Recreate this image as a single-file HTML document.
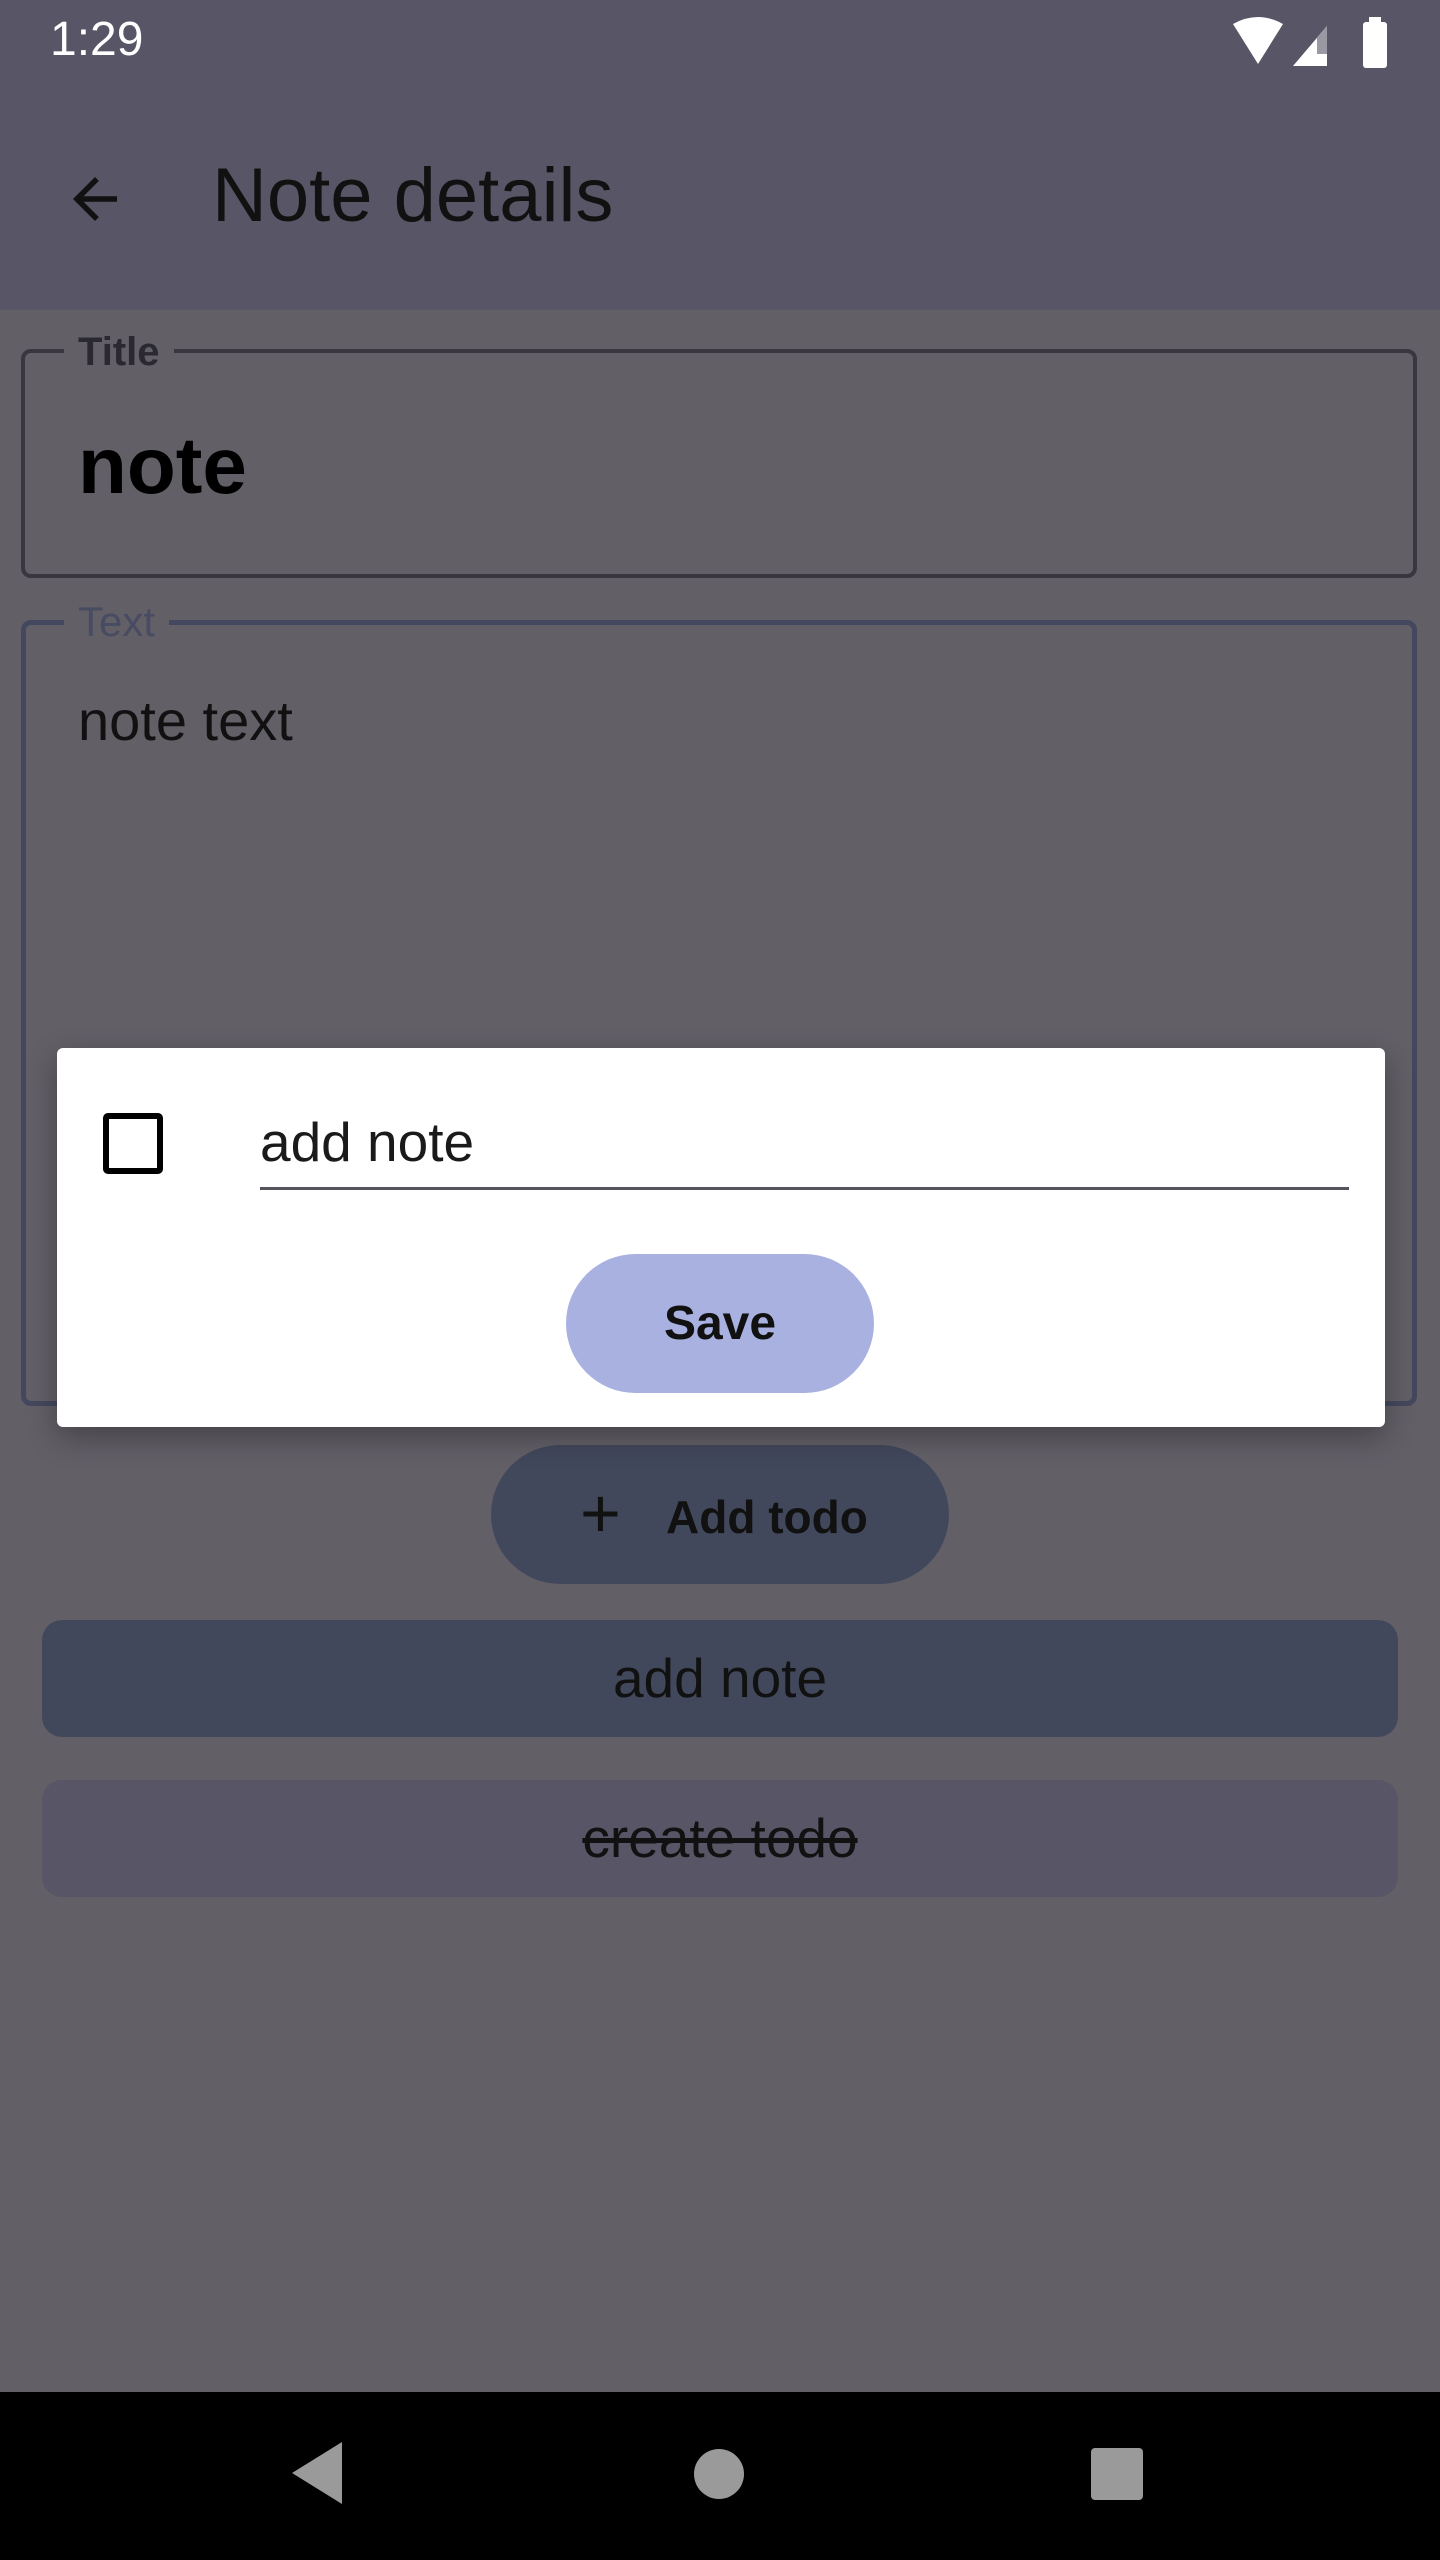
<!DOCTYPE html>
<html><head><meta charset="utf-8"><style>
*{margin:0;padding:0;box-sizing:border-box}
body{width:1440px;height:2560px;background:#625f67;font-family:"Liberation Sans",Roboto,sans-serif;position:relative;overflow:hidden;color:#000}
.abs{position:absolute}
</style></head><body>
<div class="abs" style="left:0;top:0;width:1440px;height:310px;background:#585666"></div>
<div class="abs" style="left:50px;top:12px;font-size:48px;color:#fff;font-weight:500">1:29</div>
<svg class="abs" style="left:1225px;top:14px" width="180" height="56" viewBox="0 0 180 56">
<path d="M8 10 Q33 -4 58 10 L33 50 Z" fill="#fff"/>
<path d="M68 52 L102 12 L102 52 Z" fill="#fff"/>
<path d="M92 24 L102 12 L102 40 L92 40Z" fill="#9a98a2"/>
<text x="92" y="52" font-size="18" fill="#fff" font-family="Liberation Sans">x</text>
<rect x="138" y="8" width="24" height="46" rx="3" fill="#fff"/><rect x="144" y="3" width="12" height="6" fill="#fff"/>
</svg>
<svg class="abs" style="left:62px;top:166px" width="66" height="66" viewBox="0 0 24 24"><path d="M20 11H7.83l5.59-5.59L12 4l-8 8 8 8 1.41-1.41L7.83 13H20v-2z" fill="#111"/></svg>
<div class="abs" style="left:212px;top:152px;font-size:76px;color:#111">Note details</div>

<div class="abs" style="left:21px;top:349px;width:1396px;height:229px;border:4px solid #38363f;border-radius:10px"></div>
<div class="abs" style="left:64px;top:330px;padding:0 14px;background:#625f67;font-size:40px;font-weight:bold;color:#2a2830">Title</div>
<div class="abs" style="left:78px;top:420px;font-size:80px;font-weight:bold">note</div>

<div class="abs" style="left:21px;top:620px;width:1396px;height:786px;border:5px solid #44485e;border-radius:10px"></div>
<div class="abs" style="left:64px;top:598px;padding:0 14px;background:#625f67;font-size:42px;color:#484c62">Text</div>
<div class="abs" style="left:78px;top:688px;font-size:56px;color:#111">note text</div>

<div class="abs" style="left:491px;top:1445px;width:458px;height:139px;border-radius:70px;background:#42485c"></div>
<div class="abs" style="left:580px;top:1478px;font-size:70px;color:#111;line-height:70px">+</div>
<div class="abs" style="left:666px;top:1490px;font-size:46px;font-weight:bold;color:#111">Add todo</div>

<div class="abs" style="left:42px;top:1620px;width:1356px;height:117px;border-radius:20px;background:#42485c;text-align:center;line-height:117px;font-size:55px;color:#111">add note</div>
<div class="abs" style="left:42px;top:1780px;width:1356px;height:117px;border-radius:20px;background:#575566;text-align:center;line-height:117px;font-size:55px;color:#111;text-decoration:line-through">create todo</div>

<div class="abs" style="left:57px;top:1048px;width:1328px;height:379px;background:#fff;border-radius:6px;box-shadow:0 10px 30px rgba(0,0,0,.3)"></div>
<div class="abs" style="left:103px;top:1113px;width:60px;height:61px;border:6px solid #000;border-radius:5px"></div>
<div class="abs" style="left:260px;top:1110px;font-size:55px;color:#1a1a1a">add note</div>
<div class="abs" style="left:260px;top:1187px;width:1089px;height:3px;background:#55535c"></div>
<div class="abs" style="left:566px;top:1254px;width:308px;height:139px;border-radius:70px;background:#a8b1e0;text-align:center;line-height:139px;font-size:48px;font-weight:bold;color:#111">Save</div>

<div class="abs" style="left:0;top:2392px;width:1440px;height:168px;background:#000"></div>
<svg class="abs" style="left:0;top:2392px" width="1440" height="168">
<path d="M342 50 L342 112 L292 81 Z" fill="#9a9a9a"/>
<circle cx="719" cy="82" r="25" fill="#9a9a9a"/>
<rect x="1091" y="56" width="52" height="52" rx="4" fill="#9a9a9a"/>
</svg>
</body></html>
